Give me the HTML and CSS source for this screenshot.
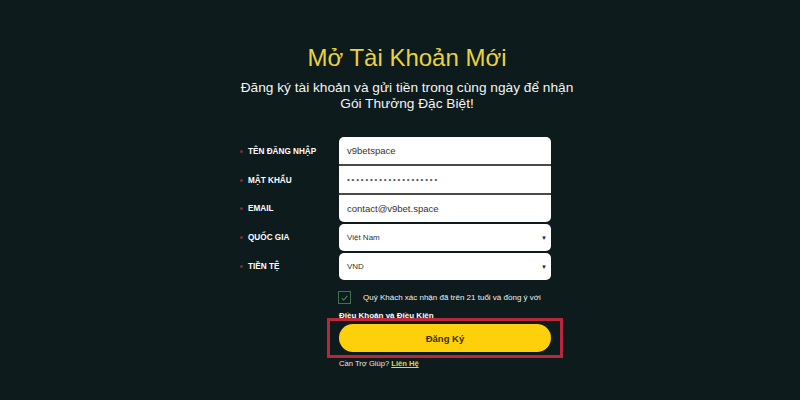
FILE: index.html
```html
<!DOCTYPE html>
<html lang="vi">
<head>
<meta charset="utf-8">
<title>Mở Tài Khoản Mới</title>
<link rel="stylesheet" href="styles.css">
</head>
<body>
<div class="page">
  <header class="head">
    <h1 class="title">Mở Tài Khoản Mới</h1>
    <p class="sub">Đăng ký tài khoản và gửi tiền trong cùng ngày để nhận<br>Gói Thưởng Đặc Biệt!</p>
  </header>
  <form class="form">
    <div class="row">
      <span class="lbl">TÊN ĐĂNG NHẬP</span>
      <div class="field input first">v9betspace</div>
    </div>
    <div class="row">
      <span class="lbl">MẬT KHẨU</span>
      <div class="field input"><span class="dots">••••••••••••••••••••</span></div>
    </div>
    <div class="row">
      <span class="lbl">EMAIL</span>
      <div class="field input last">contact@v9bet.space</div>
    </div>
    <div class="row sel-row">
      <span class="lbl">QUỐC GIA</span>
      <div class="field select"><span>Việt Nam</span><span class="arrow">▼</span></div>
    </div>
    <div class="row sel-row">
      <span class="lbl">TIỀN TỆ</span>
      <div class="field select"><span>VND</span><span class="arrow">▼</span></div>
    </div>
    <div class="under">
      <div class="agree">
        <span class="check">
          <svg viewBox="0 0 14 14" width="14" height="14"><path d="M3.5 7.2 L6 9.6 L10.6 4.4" fill="none" stroke="#4f8a5c" stroke-width="1.3"/></svg>
        </span>
        <span class="agree-text">Quý Khách xác nhận đã trên 21 tuổi và đồng ý với</span>
      </div>
      <div class="terms">Điều Khoản và Điều Kiện</div>
      <div class="btn-wrap">
        <button type="button" class="btn">Đăng Ký</button>
      </div>
      <div class="help">Cần Trợ Giúp? <a class="link" href="#">Liên Hệ</a></div>
    </div>
  </form>
</div>
</body>
</html>
```
FILE: styles.css
```css
html, body {
  margin: 0;
  padding: 0;
}
body {
  background: #0d1b1c;
  font-family: "Liberation Sans", Arial, sans-serif;
  color: #fff;
  width: 800px;
  height: 400px;
  overflow: hidden;
}
.page {
  display: flex;
  flex-direction: column;
  padding-top: 44px;
}
.head {
  width: 400px;
  margin-left: 207px;
  text-align: center;
}
.title {
  margin: 0;
  font-size: 24px;
  line-height: 28px;
  font-weight: normal;
  color: #e9d23f;
}
.sub {
  margin: 8px 0 0;
  font-size: 13.7px;
  line-height: 16px;
  color: #f4f4f4;
}
.form {
  margin: 25px 0 0 236px;
  width: 315px;
  display: flex;
  flex-direction: column;
}
.row {
  display: flex;
  align-items: center;
}
.sel-row {
  margin-top: 2px;
}
.lbl {
  width: 103px;
  box-sizing: border-box;
  padding-left: 12px;
  position: relative;
  font-size: 8.2px;
  font-weight: bold;
  color: #fff;
}
.lbl::before {
  content: "";
  position: absolute;
  left: 4px;
  top: 50%;
  width: 3px;
  height: 3px;
  margin-top: -2px;
  border-radius: 50%;
  background: #7a2c38;
}
.field {
  width: 212px;
  height: 27px;
  box-sizing: border-box;
  background: #fff;
  color: #333;
  display: flex;
  align-items: center;
  padding: 0 8px;
}
.input {
  font-size: 9.5px;
  height: 29px;
  border-bottom: 2px solid #4a4a4a;
}
.input.first {
  border-radius: 5px 5px 0 0;
}
.input.last {
  height: 27px;
  border-bottom: none;
  border-radius: 0 0 5px 5px;
}
.dots {
  font-size: 8px;
  letter-spacing: 1.8px;
  color: #555;
}
.select {
  font-size: 8px;
  border-radius: 5px;
  justify-content: space-between;
  padding-right: 4px;
}
.arrow {
  font-size: 6px;
  color: #222;
}
.under {
  margin-left: 103px;
  width: 212px;
  display: flex;
  flex-direction: column;
}
.agree {
  margin-top: 11px;
  display: flex;
  align-items: center;
  height: 13px;
}
.check {
  width: 13px;
  height: 13px;
  box-sizing: border-box;
  border: 1px solid #43704f;
  display: flex;
  align-items: center;
  justify-content: center;
  margin-left: -1px;
}
.check svg {
  width: 12px;
  height: 12px;
}
.agree-text {
  margin-left: 12px;
  font-size: 8px;
  color: #f0f0f0;
}
.terms {
  margin-top: 7px;
  font-size: 8px;
  line-height: 10px;
  font-weight: bold;
  color: #fff;
}
.btn-wrap {
  position: relative;
  margin-top: 3px;
}
.btn-wrap::after {
  content: "";
  position: absolute;
  top: -6px;
  bottom: -6px;
  left: -12px;
  right: -12px;
  border: 3px solid #b8283a;
  pointer-events: none;
}
.btn {
  display: block;
  width: 212px;
  height: 28px;
  border: none;
  border-radius: 14px;
  background: #fdd00b;
  color: #3a2f05;
  font-family: "Liberation Sans", Arial, sans-serif;
  font-size: 9.5px;
  font-weight: bold;
  padding: 0;
}
.help {
  margin-top: 7px;
  font-size: 7.6px;
  line-height: 10px;
  color: #e8e8e8;
}
.link {
  color: #e9d23f;
  font-weight: bold;
  text-decoration: underline;
}
```
